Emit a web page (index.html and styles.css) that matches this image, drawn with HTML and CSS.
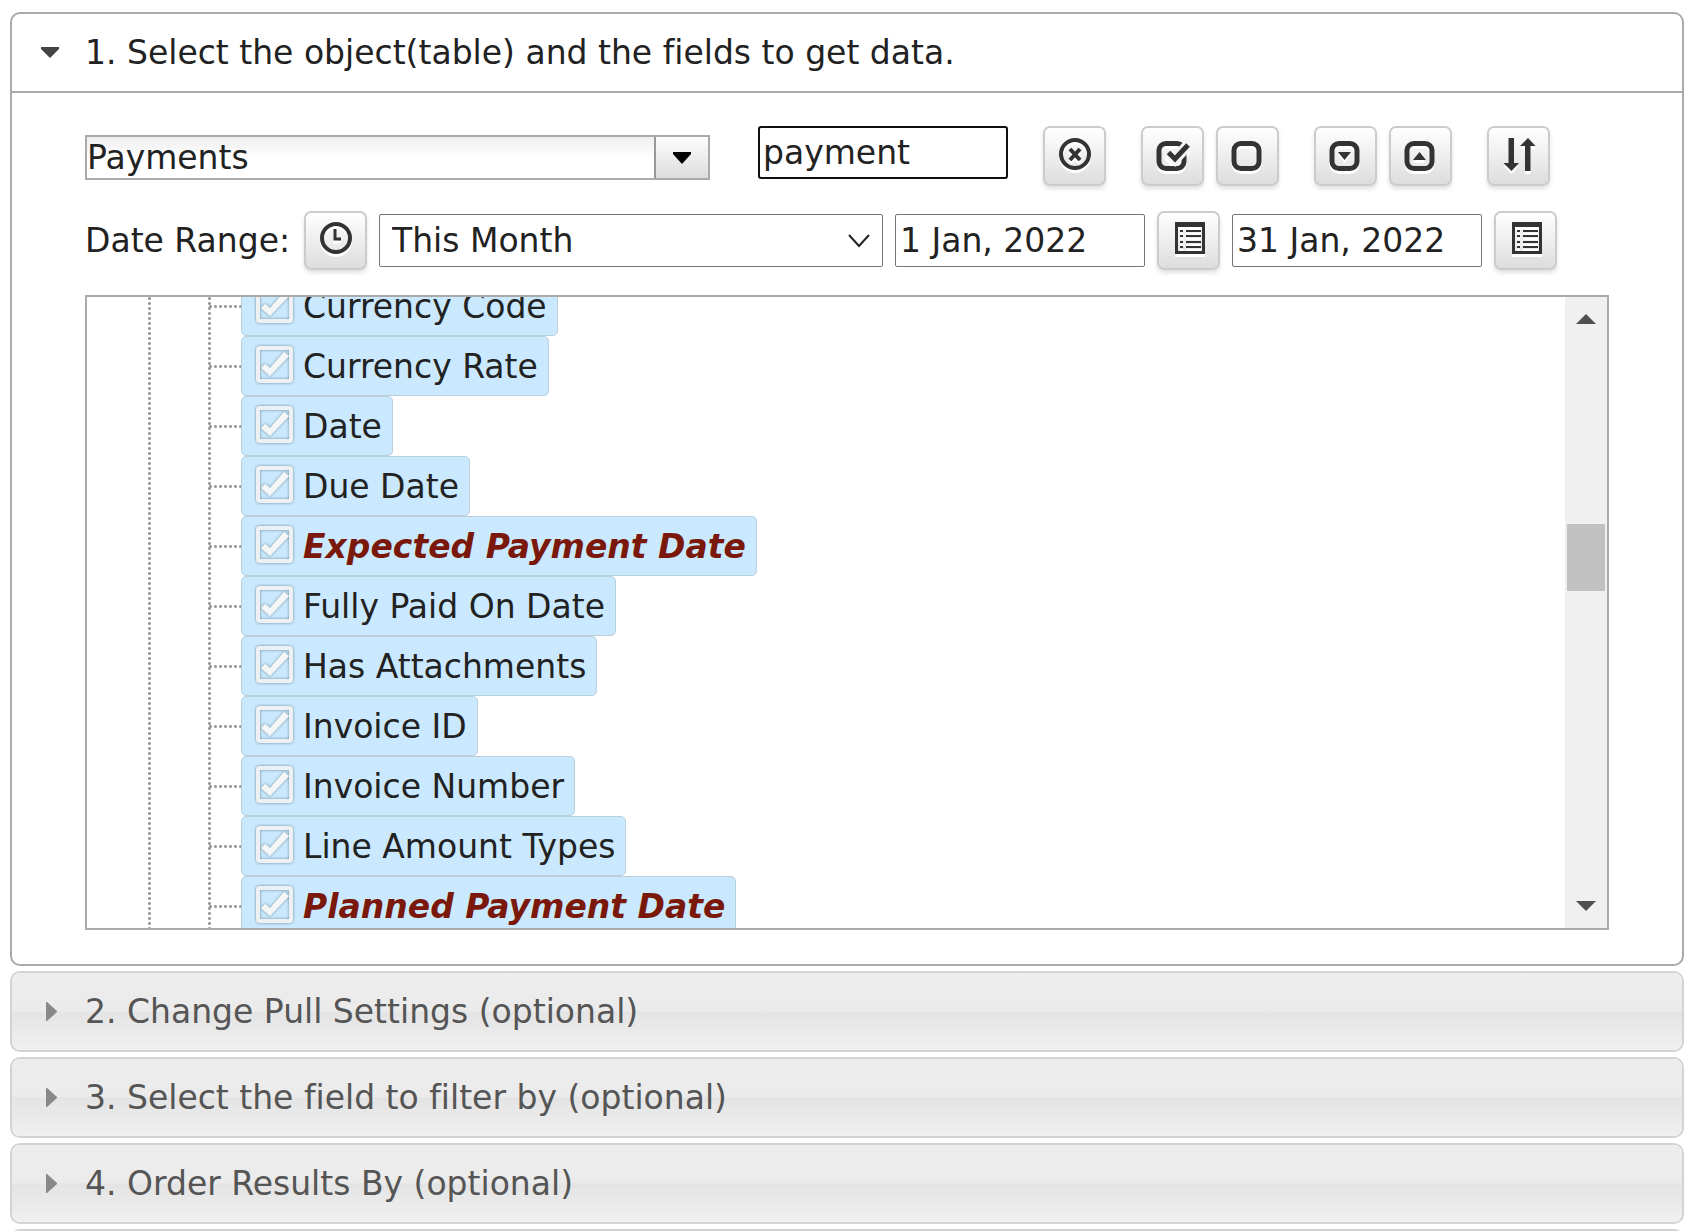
FILE: index.html
```html
<!DOCTYPE html>
<html lang="en">
<head>
    <meta charset="UTF-8" />
    <meta name="viewport" content="width=device-width, initial-scale=1" />
    <title>Pull Data</title>
    <link rel="stylesheet" href="styles.css">
</head>
<body>
    <div class="accordion">
        <section class="panel">
            <button class="panel-header" type="button" aria-expanded="true">
                <svg class="arrow" viewBox="0 0 20 20"><path d="M1 4h18v2l-9 9-9-9z" fill="#444"/></svg>
                <span>1. Select the object(table) and the fields to get data.</span>
            </button>
            <div class="panel-body">
                <div class="toolbar">
                    <div class="combo">
                        <input type="text" value="Payments" aria-label="Object">
                        <button type="button" aria-label="Show objects">
                            <svg width="18" height="12" viewBox="0 0 18 12"><path d="M0 0h18v2L9 12 0 2z" fill="#000"/></svg>
                        </button>
                    </div>
                    <input class="field search" type="text" value="payment" aria-label="Search fields">
                    <div class="btn-group">
                        <button class="btn" type="button" title="Clear search">
                            <svg viewBox="0 0 34 34"><circle cx="17" cy="16" r="14" fill="none" stroke="#333" stroke-width="4"/><path d="M12 11l10 11M22 11L12 22" stroke="#333" stroke-width="4"/></svg>
                        </button>
                    </div>
                    <div class="btn-group">
                        <button class="btn" type="button" title="Select all">
                            <svg viewBox="0 0 34 34"><rect x="3" y="5.5" width="25" height="25" rx="7" fill="none" stroke="#333" stroke-width="5"/><path d="M12 14l7 7L35 4" fill="none" stroke="#f5f5f5" stroke-width="11"/><path d="M12.500 14.500l6.500 6.500L32 7" fill="none" stroke="#333" stroke-width="5"/></svg>
                        </button>
                        <button class="btn" type="button" title="Unselect all">
                            <svg viewBox="0 0 34 34"><rect x="3" y="5.5" width="25" height="25" rx="7" fill="none" stroke="#333" stroke-width="5"/></svg>
                        </button>
                    </div>
                    <div class="btn-group">
                        <button class="btn" type="button" title="Expand all">
                            <svg viewBox="0 0 34 34"><rect x="3" y="5.5" width="25" height="25" rx="7" fill="none" stroke="#333" stroke-width="5"/><path d="M9 14h13l-6.500 8z" fill="#333"/></svg>
                        </button>
                        <button class="btn" type="button" title="Collapse all">
                            <svg viewBox="0 0 34 34"><rect x="3" y="5.5" width="25" height="25" rx="7" fill="none" stroke="#333" stroke-width="5"/><path d="M9 22h13l-6.500-8z" fill="#333"/></svg>
                        </button>
                    </div>
                    <div class="btn-group">
                        <button class="btn" type="button" title="Sort fields">
                            <svg viewBox="0 0 34 34"><path d="M6.500 0h5.500v25h5l-7.500 8L1.500 25h5zM28.500 33V8h5L26 0l-8 8h5v25z" fill="#333"/></svg>
                        </button>
                    </div>
                </div>

                <div class="date-range">
                    <label for="range">Date Range:</label>
                    <button class="btn" type="button" title="Time">
                        <svg viewBox="0 0 34 34"><circle cx="17" cy="16" r="14" fill="none" stroke="#333" stroke-width="4"/><path d="M16 7v10h6" fill="none" stroke="#333" stroke-width="3"/></svg>
                    </button>
                    <select class="field range" id="range">
                        <option>This Month</option>
                    </select>
                    <input class="field" type="text" value="1 Jan, 2022" aria-label="From date">
                    <button class="btn" type="button" title="Pick from date">
                        <svg viewBox="0 0 34 34"><path d="M3 0h30v32H3zM6 5v24h24V5z" fill="#333" fill-rule="evenodd"/><path d="M8 9h3M14 9h15M8 14h3M14 14h15M8 20h3M14 20h15M8 25h3M14 25h15" stroke="#333" stroke-width="2"/></svg>
                    </button>
                    <input class="field" type="text" value="31 Jan, 2022" aria-label="To date">
                    <button class="btn" type="button" title="Pick to date">
                        <svg viewBox="0 0 34 34"><path d="M3 0h30v32H3zM6 5v24h24V5z" fill="#333" fill-rule="evenodd"/><path d="M8 9h3M14 9h15M8 14h3M14 14h15M8 20h3M14 20h15M8 25h3M14 25h15" stroke="#333" stroke-width="2"/></svg>
                    </button>
                </div>

                <div class="tree-box">
                    <ul class="tree">
                        <li><label><input type="checkbox" checked>Currency Code</label></li>
                        <li><label><input type="checkbox" checked>Currency Rate</label></li>
                        <li><label><input type="checkbox" checked>Date</label></li>
                        <li><label><input type="checkbox" checked>Due Date</label></li>
                        <li><label class="match"><input type="checkbox" checked>Expected Payment Date</label></li>
                        <li><label><input type="checkbox" checked>Fully Paid On Date</label></li>
                        <li><label><input type="checkbox" checked>Has Attachments</label></li>
                        <li><label><input type="checkbox" checked>Invoice ID</label></li>
                        <li><label><input type="checkbox" checked>Invoice Number</label></li>
                        <li><label><input type="checkbox" checked>Line Amount Types</label></li>
                        <li><label class="match"><input type="checkbox" checked>Planned Payment Date</label></li>
                    </ul>
                    <div class="scrollbar">
                        <svg width="20" height="10" viewBox="0 0 20 10"><path d="M0 10L10 0l10 10z" fill="#505050"/></svg>
                        <div class="track"><div class="thumb"></div></div>
                        <svg width="20" height="10" viewBox="0 0 20 10"><path d="M0 0h20L10 10z" fill="#505050"/></svg>
                    </div>
                </div>
            </div>
        </section>

        <section class="panel closed">
            <button class="panel-header" type="button" aria-expanded="false">
                <svg class="arrow" viewBox="0 0 20 20"><path d="M6 0h1l10 9v1L7 19H6z" fill="#888"/></svg>
                <span>2. Change Pull Settings (optional)</span>
            </button>
        </section>
        <section class="panel closed">
            <button class="panel-header" type="button" aria-expanded="false">
                <svg class="arrow" viewBox="0 0 20 20"><path d="M6 0h1l10 9v1L7 19H6z" fill="#888"/></svg>
                <span>3. Select the field to filter by (optional)</span>
            </button>
        </section>
        <section class="panel closed">
            <button class="panel-header" type="button" aria-expanded="false">
                <svg class="arrow" viewBox="0 0 20 20"><path d="M6 0h1l10 9v1L7 19H6z" fill="#888"/></svg>
                <span>4. Order Results By (optional)</span>
            </button>
        </section>
        <section class="panel closed">
            <button class="panel-header" type="button" aria-expanded="false" aria-label="More settings"></button>
        </section>
    </div>
</body>
</html>
```
FILE: styles.css
```css
* {
    box-sizing: border-box;
}
body {
    margin: 0;
    padding: 12px 6px 0 10px;
    height: 100vh;
    overflow: hidden;
    background: #fff;
    color: #222;
    font-family: Verdana, "DejaVu Sans", sans-serif;
    font-size: 33px;
    line-height: 40px;
    font-variant-ligatures: none;
}
button, input, select {
    font: inherit;
    color: inherit;
    margin: 0;
}
svg {
    display: block;
}

/* accordion */
.accordion {
    display: flex;
    flex-direction: column;
    gap: 5px;
}
.panel {
    border: 2px solid #aaa;
    border-radius: 10px;
    background: #fff;
}
.panel-header {
    display: flex;
    align-items: center;
    width: 100%;
    height: 77px;
    padding: 0 28px;
    border: 0;
    border-radius: 8px;
    background: none;
    text-align: left;
    font-variant-ligatures: none;
}
.arrow {
    width: 20px;
    height: 20px;
    margin-right: 25px;
}
.closed {
    border-color: #d3d3d3;
    color: #555;
}
.closed .panel-header {
    background: linear-gradient(#ededed 0%, #ebebeb 49%, #e4e4e4 51%, #f0f0f0 100%);
}
.panel-body {
    display: flex;
    flex-direction: column;
    gap: 25px;
    padding: 33px 73px 34px;
    border-top: 2px solid #aaa;
}

/* controls */
.toolbar {
    display: flex;
    align-items: flex-start;
    gap: 35px;
}
.date-range {
    display: flex;
    align-items: center;
    gap: 12px;
}
.date-range label {
    width: 207px;
    white-space: nowrap;
}
.combo {
    display: flex;
    width: 625px;
    height: 45px;
    margin: 9px 13px 0 0;
    border: 2px solid #aaa;
}
.combo input {
    flex: 1;
    min-width: 0;
    padding: 0;
    border: 0;
    background: linear-gradient(#eee, #fff 50%);
}
.combo button {
    display: flex;
    align-items: center;
    justify-content: center;
    width: 54px;
    padding: 0;
    border: 0;
    border-left: 2px solid #999;
    background: linear-gradient(#fdfdfd, #ddd);
}
.field {
    width: 250px;
    height: 53px;
    padding: 0 4px;
    border: 1px solid #767676;
    border-radius: 2px;
    background: #fff;
}
.search {
    border: 2px solid #101010;
    border-radius: 3px;
    padding: 0 3px;
}
.range {
    width: 504px;
    padding: 0 12px;
    appearance: none;
    background: #fff url("data:image/svg+xml,%3Csvg xmlns='http://www.w3.org/2000/svg' width='22' height='14'%3E%3Cpath d='M1 1l10 11L21 1' fill='none' stroke='%23222' stroke-width='2'/%3E%3C/svg%3E") no-repeat right 12px center;
}
.btn-group {
    display: flex;
    gap: 12px;
}
.btn {
    display: flex;
    align-items: flex-start;
    justify-content: center;
    width: 63px;
    height: 60px;
    padding: 10px 0 0;
    border: 2px solid #ccc;
    border-radius: 7px;
    background: linear-gradient(#fff, #ddd);
    box-shadow: 0 3px 4px rgba(0,0,0,0.12);
}
.date-range .btn {
    height: 59px;
    padding-top: 9px;
}
.btn svg {
    width: 34px;
    height: 34px;
    filter: drop-shadow(0 3px 0 #fff);
}

/* field tree */
.tree-box {
    display: flex;
    height: 635px;
    border: 2px solid #aaa;
    overflow: hidden;
}
/* scrolled part way down the list */
.tree {
    flex: 1;
    margin: -21px 0 0 61px;
    padding: 0;
    list-style: none;
    background: radial-gradient(circle, #999 1px, transparent 2px) 0 0 / 3px 5px repeat-y;
}
.tree li {
    display: flex;
    align-items: center;
    height: 60px;
    margin-left: 60px;
    background: radial-gradient(circle, #999 1px, transparent 2px) 0 0 / 3px 5px repeat-y;
}
.tree li::before {
    content: "";
    width: 33px;
    height: 3px;
    background: radial-gradient(circle, #999 1px, transparent 2px) 0 0 / 5px 3px repeat-x;
}
.tree label {
    display: flex;
    align-items: center;
    height: 60px;
    padding: 2px 10px 0 12px;
    border: 1px solid #b9cfdc;
    border-radius: 5px;
    background: #cbe9fe;
    white-space: nowrap;
}
.tree .match {
    color: #7a190b;
    font-weight: bold;
    font-style: italic;
}
.tree input {
    width: 42px;
    height: 42px;
    margin: 0 7px 4px 0;
    appearance: none;
}
.tree input:checked {
    background: url("data:image/svg+xml,%3Csvg xmlns='http://www.w3.org/2000/svg' viewBox='0 0 42 42'%3E%3Cfilter id='s' x='-20%25' y='-20%25' width='140%25' height='140%25'%3E%3CfeDropShadow dx='0' dy='0' stdDeviation='1.5' flood-color='%23507080' flood-opacity='.8'/%3E%3C/filter%3E%3Cg filter='url(%23s)'%3E%3Crect x='4' y='4' width='33' height='33' rx='2' fill='none' stroke='%23eef1f3' stroke-width='4'/%3E%3Cpath d='M7 24l4-4 5 4L30 8l5 4-19 20z' fill='%23f5f6f7'/%3E%3C/g%3E%3C/svg%3E") no-repeat center;
}
.scrollbar {
    display: flex;
    flex-direction: column;
    align-items: center;
    width: 42px;
    padding: 17px 0;
    background: #f0f0f0;
}
.track {
    flex: 1;
    display: flex;
    flex-direction: column;
    padding: 15px 0;
}
.track::before {
    content: "";
    flex: 185;
}
.track::after {
    content: "";
    flex: 295;
}
.thumb {
    width: 38px;
    height: 67px;
    background: #c1c1c1;
}
```
